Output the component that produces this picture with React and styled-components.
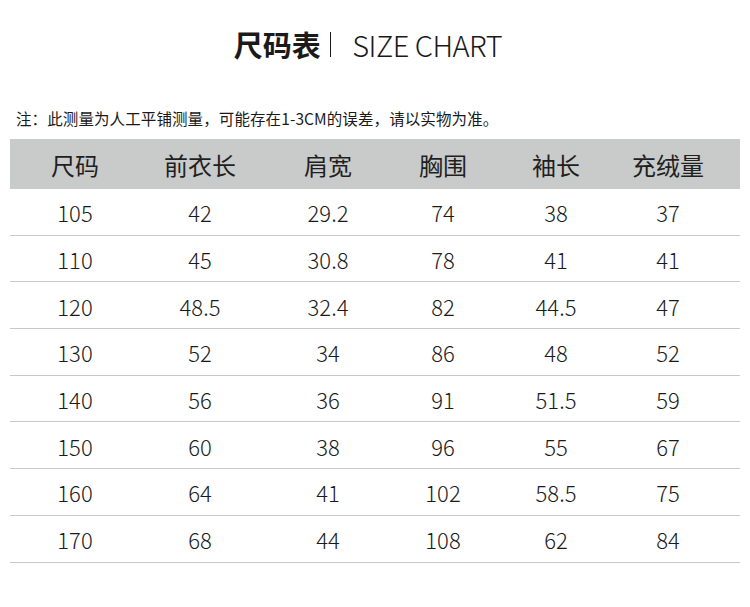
import React from 'react';
import styled, { createGlobalStyle } from 'styled-components';

const GlobalStyle = createGlobalStyle`
  html, body {
    margin:0;
    padding:0;
    background:#fff;
  }
  body {
    font-family:'Noto Sans CJK SC', 'Noto Sans', sans-serif;
    color:#1a1a1a;
  }
`

const Page = styled.div`
  width:750px;
  height:607px;
  background:#fff;
  display:flex;
  flex-direction:column;
  padding:0 10px;
  box-sizing:border-box;
`

const Title = styled.h1`
  margin:0;
  height:88px;
  padding-bottom:2px;
  display:flex;
  align-items:center;
  justify-content:center;
  font-size:29px;
  font-weight:400;
  line-height:1;
  padding-right:14px;
`

const TitleCn = styled.span`
  font-weight:700;
`

const Divider = styled.span`
  display:inline-block;
  width:1.5px;
  height:25px;
  background:#1a1a1a;
  margin:0 21px 0 9px;
`

const TitleEn = styled.span`
  font-weight:300;
  letter-spacing:-0.5px;
`

const Note = styled.p`
  margin:0;
  padding:18px 0 0 6px;
  height:49px;
  box-sizing:border-box;
  font-size:15.5px;
  line-height:20px;
  letter-spacing:0.1px;
  color:#1a1a1a;
`

const Table = styled.div`
  display:grid;
  grid-template-columns:130px 120px 136px 94px 132px 92px 26px;
`

const HeadCell = styled.div`
  height:50px;
  background:#c9caca;
  display:flex;
  align-items:center;
  justify-content:center;
  font-size:24px;
  font-weight:400;
  color:#1f1f1f;
`

const Cell = styled.div`
  height:46.7px;
  box-sizing:border-box;
  border-bottom:1px solid #c8c8c8;
  display:flex;
  align-items:center;
  justify-content:center;
  font-size:22px;
  font-weight:300;
  color:#1a1a1a;
  padding-top:1px;
`

const headers = ['尺码', '前衣长', '肩宽', '胸围', '袖长', '充绒量'];

const rows = [
  ['105', '42', '29.2', '74', '38', '37'],
  ['110', '45', '30.8', '78', '41', '41'],
  ['120', '48.5', '32.4', '82', '44.5', '47'],
  ['130', '52', '34', '86', '48', '52'],
  ['140', '56', '36', '91', '51.5', '59'],
  ['150', '60', '38', '96', '55', '67'],
  ['160', '64', '41', '102', '58.5', '75'],
  ['170', '68', '44', '108', '62', '84'],
];

export default function App() {
  return (
    <Page>
      <GlobalStyle />
      <Title>
        <TitleCn>尺码表</TitleCn>
        <Divider />
        <TitleEn>SIZE CHART</TitleEn>
      </Title>
      <Note>注：此测量为人工平铺测量，可能存在1-3CM的误差，请以实物为准。</Note>
      <Table>
        {headers.map(h => <HeadCell key={h}>{h}</HeadCell>)}
        <HeadCell />
        {rows.map((row, i) => (
          <React.Fragment key={i}>
            {row.map((v, j) => <Cell key={j}>{v}</Cell>)}
            <Cell />
          </React.Fragment>
        ))}
      </Table>
    </Page>
  );
}
